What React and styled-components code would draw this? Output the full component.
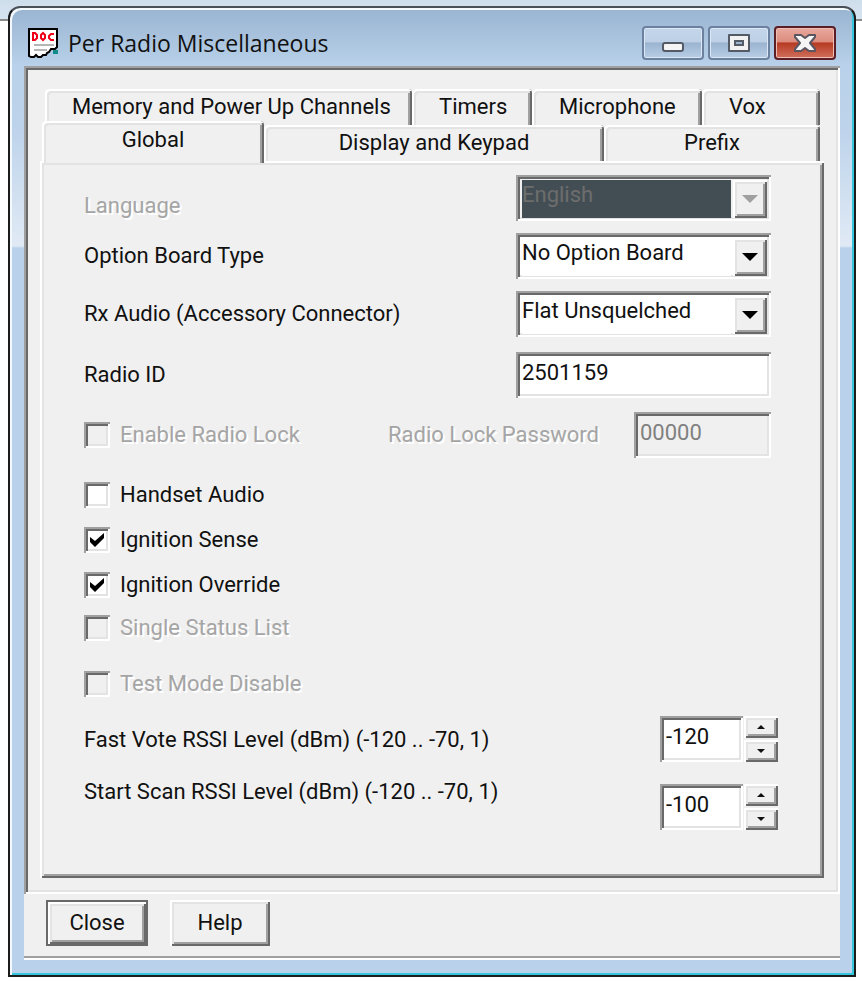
import React, { useId, useState } from "react";
import styled, { createGlobalStyle, css } from "styled-components";

const GlobalStyle = createGlobalStyle`
  *, *::before, *::after { box-sizing: border-box; }
  body {
    margin: 0;
    background: linear-gradient(#cfdeeb 0, #d6e4f0 19px, #8a8a8a 19px, #8a8a8a 21px, #fff 21px) no-repeat;
    font-family: Roboto, "Liberation Sans", sans-serif;
    font-size: 22px;
    line-height: 30px;
    color: #111;
  }
  button, input, select { font: inherit; color: inherit; margin: 0; border-radius: 0; }
`;

const sunken = css`
  box-shadow: inset 2px 2px #a0a0a0, inset -2px -2px #fff,
    inset 4px 4px #696969, inset -4px -4px #e3e3e3;
`;
const raised = css`
  box-shadow: inset 2px 2px #fff, inset -2px -2px #696969,
    inset 4px 4px #e3e3e3, inset -4px -4px #a0a0a0;
`;

const Dialog = styled.main`
  margin: 6px 6px 8px 8px;
  padding: 0 14px 15px;
  border: 2px solid #1c1c1c;
  border-top-color: #4a4f55;
  border-radius: 12px 12px 0 0;
  background: linear-gradient(#99b4d1 0, #b9d1ea 58px, #bdd3eb 120px, #e0eaf5 238px, #b9d1ea 240px);
  box-shadow: inset 2px 2px #f4f9fd, inset -2px -2px #35c5dc;
`;

const TitleBar = styled.header`
  display: flex;
  align-items: center;
  height: 58px;
  padding: 12px 4px 0;
`;
const Title = styled.h1`
  flex: 1;
  margin: 0 0 0 9px;
  font: 400 23px/32px "Open Sans", "Noto Sans", sans-serif;
`;
const WindowButtons = styled.div`
  display: flex;
  gap: 4px;
`;
const WindowButton = styled.button`
  display: grid;
  place-items: center;
  width: 62px;
  height: 34px;
  padding: 0;
  border: 2px solid ${(p) => (p.$danger ? "#5b1d26" : "#6c80a0")};
  border-radius: 4px;
  background: ${(p) =>
    p.$danger
      ? "linear-gradient(#e9a99e 0, #dc8c7e 46%, #b73a22 50%, #d0705c 100%)"
      : "linear-gradient(#c4d6ea 0, #bdd0e6 46%, #9bb4d0 50%, #b8cde6 100%)"};
  box-shadow: inset 0 0 0 1px ${(p) => (p.$danger ? "#eebdb4" : "#dbe7f4")};
`;

const Client = styled.div`
  background: #f0f0f0;
  border-bottom: 2px solid #fff;
  box-shadow: inset 0 -2px #a0a0a0;
`;
const Well = styled.div`
  ${sunken}
  padding: 23px 16px 16px;
`;
const TabRow = styled.div`
  display: grid;
  grid-template-columns: ${(p) => p.$columns};
  margin: ${(p) => p.$margin};
`;
const Tab = styled.button`
  height: 36px;
  padding: ${(p) => (p.$start ? "0 0 0 27px" : "0")};
  border: 0;
  border-radius: 4px 4px 0 0;
  background: #f0f0f0;
  text-align: ${(p) => (p.$start ? "left" : "center")};
  white-space: nowrap;
  box-shadow: inset 2px 2px #fff, inset -2px 0 #696969, inset 4px 4px #e3e3e3, inset -4px 0 #a0a0a0;
  ${(p) =>
    p.$selected &&
    css`
      position: relative;
      height: 42px;
      margin: -4px 0 -3px;
      padding-bottom: 4px;
    `}
`;
const Page = styled.section`
  ${raised}
  padding: 14px 46px 48px 44px;
`;

const Fields = styled.div`
  display: flex;
  flex-direction: column;
  gap: ${(p) => p.$gap};
  margin-bottom: ${(p) => p.$after};
  padding-right: 7px;
`;
const FieldRow = styled.div`
  display: flex;
  align-items: ${(p) => p.$align || "center"};
  justify-content: space-between;
`;
const faded = css`
  color: #a5a5a5;
  text-shadow: 2px 2px #fff;
`;
const Label = styled.label`
  white-space: nowrap;
  ${(p) => p.$disabled && faded}
`;
const PasswordLabel = styled(Label)`
  width: 246px;
`;

const SelectFrame = styled.span`
  ${sunken}
  display: grid;
  grid-template-columns: 1fr 34px;
  width: 255px;
  height: 46px;
  padding: 5px 4px 4px 6px;
  background: ${(p) => (p.$disabled ? "#f0f0f0" : "#fff")};
`;
const NativeSelect = styled.select`
  grid-area: 1 / 1 / 2 / 3;
  appearance: none;
  min-width: 0;
  padding: 0 0 8px;
  border: 0;
  border-right: 36px solid transparent;
  background: #fff padding-box;
  &:disabled {
    background-color: #434e54;
    color: #6d6d6d;
    opacity: 1;
  }
`;
const DropArrow = styled.span`
  ${raised}
  grid-area: 1 / 2 / 2 / 3;
  display: grid;
  place-items: center;
  z-index: 1;
  background: #f0f0f0;
  color: ${(p) => (p.$disabled ? "#a0a0a0" : "#000")};
  pointer-events: none;
`;
const TextBox = styled.input`
  ${sunken}
  width: ${(p) => p.$width};
  height: 46px;
  padding: 4px 6px 10px;
  border: 0;
  background: #fff;
  &:disabled {
    background: #f0f0f0;
    color: #808080;
  }
`;

const CheckLabel = styled.label`
  display: flex;
  align-items: center;
  gap: 10px;
  width: fit-content;
  height: 26px;
  margin-top: ${(p) => p.$before || "0"};
  ${(p) => p.$disabled && faded}
`;
const CheckSlot = styled.span`
  display: grid;
  svg { display: none; }
  input:checked + svg { display: block; }
`;
const CheckBox = styled.input`
  ${sunken}
  appearance: none;
  grid-area: 1 / 1;
  width: 26px;
  height: 26px;
  background: #fff;
  &:disabled { background: #f0f0f0; }
`;
const CheckMark = styled.svg`
  grid-area: 1 / 1;
  place-self: center;
  z-index: 1;
  pointer-events: none;
`;
const CheckList = styled.div`
  display: flex;
  flex-direction: column;
`;

const Levels = styled.div`
  display: flex;
  justify-content: space-between;
  margin-top: 19px;
`;
const LevelLabels = styled.div`
  display: flex;
  flex-direction: column;
  gap: 22px;
  padding-top: 9px;
`;
const LevelInputs = styled.div`
  display: flex;
  flex-direction: column;
  gap: 22px;
`;
const Spinner = styled.div`
  display: flex;
  gap: 1px;
`;
const SpinButtons = styled.div`
  display: grid;
  gap: 2px;
  grid-template-rows: 1fr 1fr;
  width: 34px;
`;
const SpinButton = styled.button`
  ${raised}
  display: grid;
  place-items: center;
  padding: 0;
  border: 0;
  background: #f0f0f0;
`;

const Footer = styled.footer`
  display: flex;
  gap: 22px;
  padding: 6px 22px 12px;
`;
const PushButton = styled.button`
  ${raised}
  min-width: ${(p) => (p.$default ? "102px" : "100px")};
  height: 46px;
  padding: 0 16px;
  border: ${(p) => (p.$default ? "2px solid #696969" : "0")};
  background: #f0f0f0;
`;

const DocIcon = () => (
  <svg width="31" height="31" viewBox="0 0 31 31" aria-hidden="true">
    <path d="M25 22h5v4h-5z" fill="#128a8a" />
    <path d="M1 1H29V19L27 21H23L21 24L19 25L18 27H15L13 29H10L8 27L6 29H3L1 28Z" fill="#fff" stroke="#000" strokeWidth="2" />
    <g fill="none" stroke="#f00018" strokeWidth="2">
      <path d="M5 5v7h2l2-2V7L7 5Z" />
      <path d="M13 7l2-2 2 2v3l-2 2-2-2Z" />
      <path d="M26 6h-3l-2 2v2l2 2h3" />
    </g>
    <path d="M6 17h20M6 22h13" stroke="#b5b5b5" strokeWidth="2" />
  </svg>
);
const MinimizeIcon = () => (
  <svg width="24" height="20" viewBox="0 0 24 20" aria-hidden="true">
    <rect x="2" y="10" width="20" height="8" rx="2" fill="#f5f5f5" stroke="#555b66" strokeWidth="2" />
  </svg>
);
const MaximizeIcon = () => (
  <svg width="24" height="20" viewBox="0 0 24 20" aria-hidden="true">
    <path d="M2 2H22V18H2Z" fill="#f2f2f2" stroke="#555b66" strokeWidth="2" strokeLinejoin="round" />
    <rect x="8" y="8" width="8" height="4" fill="#9bb4d0" stroke="#555b66" strokeWidth="2" />
  </svg>
);
const CloseIcon = () => (
  <svg width="24" height="20" viewBox="0 0 24 20" aria-hidden="true">
    <path d="M2 2H8L12 5L16 2H22V4L17 10L22 16V18H16L12 15L8 18H2V16L7 10L2 4Z" fill="#f5f5f5" stroke="#5a5560" strokeWidth="2" strokeLinejoin="round" />
  </svg>
);
const Triangle = ({ size, up }) => (
  <svg width={size} height={size / 2} viewBox="0 0 14 7" fill="currentColor" aria-hidden="true">
    <path d={up ? "M0 7H14L7 0Z" : "M0 0H14L7 7Z"} />
  </svg>
);

function SelectField({ label, value, disabled, align }) {
  const id = useId();
  return (
    <FieldRow $align={align}>
      <Label htmlFor={id} $disabled={disabled}>{label}</Label>
      <SelectFrame $disabled={disabled}>
        <NativeSelect id={id} disabled={disabled} defaultValue={value}>
          <option>{value}</option>
        </NativeSelect>
        <DropArrow $disabled={disabled}><Triangle size={16} /></DropArrow>
      </SelectFrame>
    </FieldRow>
  );
}

function CheckField({ label, checked, disabled, before }) {
  return (
    <CheckLabel $disabled={disabled} $before={before}>
      <CheckSlot>
        <CheckBox type="checkbox" defaultChecked={checked} disabled={disabled} />
        <CheckMark width="16" height="16" viewBox="0 0 16 16" fill="#000">
          <path d="M1 5L6 9L15 1V6L6 15L1 10Z" />
        </CheckMark>
      </CheckSlot>
      {label}
    </CheckLabel>
  );
}

function LevelSpinner({ id, initial }) {
  const [value, setValue] = useState(initial);
  const step = (d) => setValue((v) => Math.min(-70, Math.max(-120, Number(v) + d)));
  return (
    <Spinner>
      <TextBox id={id} $width="83px" value={value} onChange={(e) => setValue(e.target.value)} />
      <SpinButtons>
        <SpinButton type="button" aria-label="Increase" onClick={() => step(1)}><Triangle size={8} up /></SpinButton>
        <SpinButton type="button" aria-label="Decrease" onClick={() => step(-1)}><Triangle size={8} /></SpinButton>
      </SpinButtons>
    </Spinner>
  );
}

export default function App() {
  return (
    <>
      <GlobalStyle />
      <Dialog>
        <TitleBar>
          <DocIcon />
          <Title>Per Radio Miscellaneous</Title>
          <WindowButtons>
            <WindowButton type="button" aria-label="Minimize"><MinimizeIcon /></WindowButton>
            <WindowButton type="button" aria-label="Maximize"><MaximizeIcon /></WindowButton>
            <WindowButton type="button" aria-label="Close window" $danger><CloseIcon /></WindowButton>
          </WindowButtons>
        </TitleBar>
        <Client>
          <Well>
            <div role="tablist">
              <TabRow $columns="367fr 120fr 170fr 118fr" $margin="0 4px 0 5px">
                <Tab type="button" role="tab" $start>Memory and Power Up Channels</Tab>
                <Tab type="button" role="tab" $start>Timers</Tab>
                <Tab type="button" role="tab" $start>Microphone</Tab>
                <Tab type="button" role="tab" $start>Vox</Tab>
              </TabRow>
              <TabRow $columns="222fr 340fr 216fr" $margin="0 4px 0 2px">
                <Tab type="button" role="tab" aria-selected="true" $selected>Global</Tab>
                <Tab type="button" role="tab">Display and Keypad</Tab>
                <Tab type="button" role="tab">Prefix</Tab>
              </TabRow>
            </div>
            <Page role="tabpanel">
              <Fields $gap="12px" $after="15px">
                <SelectField label="Language" value="English" disabled align="end" />
                <SelectField label="Option Board Type" value="No Option Board" />
                <SelectField label="Rx Audio (Accessory Connector)" value="Flat Unsquelched" />
              </Fields>
              <Fields $gap="14px" $after="24px">
                <FieldRow>
                  <Label htmlFor="radio-id">Radio ID</Label>
                  <TextBox id="radio-id" $width="255px" defaultValue="2501159" />
                </FieldRow>
                <FieldRow>
                  <CheckField label="Enable Radio Lock" disabled />
                  <FieldRow as="span">
                    <PasswordLabel htmlFor="lock-password" $disabled>Radio Lock Password</PasswordLabel>
                    <TextBox id="lock-password" $width="137px" defaultValue="00000" disabled />
                  </FieldRow>
                </FieldRow>
              </Fields>
              <CheckList>
                <CheckField label="Handset Audio" />
                <CheckField label="Ignition Sense" checked before="19px" />
                <CheckField label="Ignition Override" checked before="19px" />
                <CheckField label="Single Status List" disabled before="17px" />
                <CheckField label="Test Mode Disable" disabled before="30px" />
              </CheckList>
              <Levels>
                <LevelLabels>
                  <Label htmlFor="fast-vote">Fast Vote RSSI Level (dBm) (-120 .. -70, 1)</Label>
                  <Label htmlFor="start-scan">Start Scan RSSI Level (dBm) (-120 .. -70, 1)</Label>
                </LevelLabels>
                <LevelInputs>
                  <LevelSpinner id="fast-vote" initial={-120} />
                  <LevelSpinner id="start-scan" initial={-100} />
                </LevelInputs>
              </Levels>
            </Page>
          </Well>
          <Footer>
            <PushButton type="button" $default>Close</PushButton>
            <PushButton type="button">Help</PushButton>
          </Footer>
        </Client>
      </Dialog>
    </>
  );
}
